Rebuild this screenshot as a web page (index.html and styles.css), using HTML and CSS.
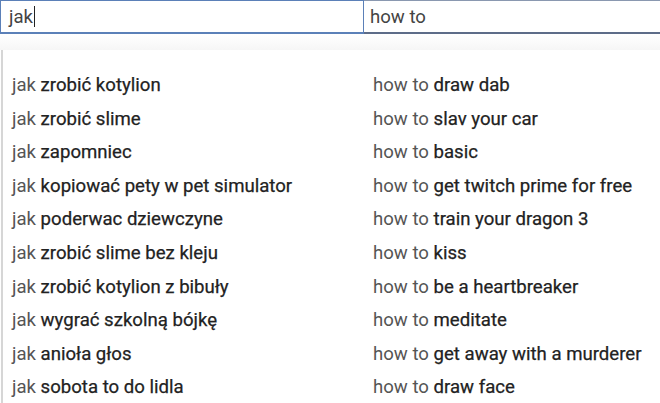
FILE: index.html
```html
<!DOCTYPE html>
<html>
<head>
<meta charset="utf-8">
<link rel="stylesheet" href="styles.css">
</head>
<body>
<div class="bar">
  <div class="input left"><span>jak</span><span class="caret"></span></div>
  <div class="input right"><span>how to</span></div>
</div>
<div class="gap"></div>
<div class="panel">
  <ul class="col col-left">
    <li>jak <b>zrobić kotylion</b></li>
    <li>jak <b>zrobić slime</b></li>
    <li>jak <b>zapomniec</b></li>
    <li>jak <b>kopiować pety w pet simulator</b></li>
    <li>jak <b>poderwac dziewczyne</b></li>
    <li>jak <b>zrobić slime bez kleju</b></li>
    <li>jak <b>zrobić kotylion z bibuły</b></li>
    <li>jak <b>wygrać szkolną bójkę</b></li>
    <li>jak <b>anioła głos</b></li>
    <li>jak <b>sobota to do lidla</b></li>
  </ul>
  <ul class="col col-right">
    <li>how to <b>draw dab</b></li>
    <li>how to <b>slav your car</b></li>
    <li>how to <b>basic</b></li>
    <li>how to <b>get twitch prime for free</b></li>
    <li>how to <b>train your dragon 3</b></li>
    <li>how to <b>kiss</b></li>
    <li>how to <b>be a heartbreaker</b></li>
    <li>how to <b>meditate</b></li>
    <li>how to <b>get away with a murderer</b></li>
    <li>how to <b>draw face</b></li>
  </ul>
</div>
</body>
</html>
```
FILE: styles.css
```css
html, body {
  margin: 0;
  padding: 0;
  background: #fff;
  font-family: Roboto, "Liberation Sans", sans-serif;
  overflow: hidden;
}
.bar {
  display: flex;
  height: 34px;
}
.input {
  box-sizing: border-box;
  height: 34px;
  display: flex;
  align-items: center;
  font-size: 18.6px;
  color: #444;
}
.left {
  width: 364px;
  border: 1px solid #5b80b8;
  border-bottom-width: 2px;
  padding-left: 8px;
}
.right {
  flex: 1;
  border-top: 1px solid #8a98b0;
  border-bottom: 2px solid #5d6c88;
  padding-left: 6px;
}
.caret {
  display: inline-block;
  width: 1px;
  height: 21px;
  background: #222;
  margin-left: 1px;
}
.gap {
  height: 16px;
  background: linear-gradient(#fff, #f6f6f6);
}
.panel {
  display: flex;
  border-left: 2px solid #d6d6d6;
  margin-left: 1px;
  padding-top: 19px;
  height: 334px;
}
.col {
  list-style: none;
  margin: 0;
  padding: 0;
}
.col li {
  height: 33.6px;
  line-height: 33.6px;
  font-size: 18.6px;
  color: #555;
  white-space: nowrap;
}
.col b {
  font-weight: normal;
  color: #222;
  -webkit-text-stroke: 0.25px #222;
}
.col-left {
  width: 361px;
  padding-left: 9px;
}
.col-right {
  flex: 1;
}
```
